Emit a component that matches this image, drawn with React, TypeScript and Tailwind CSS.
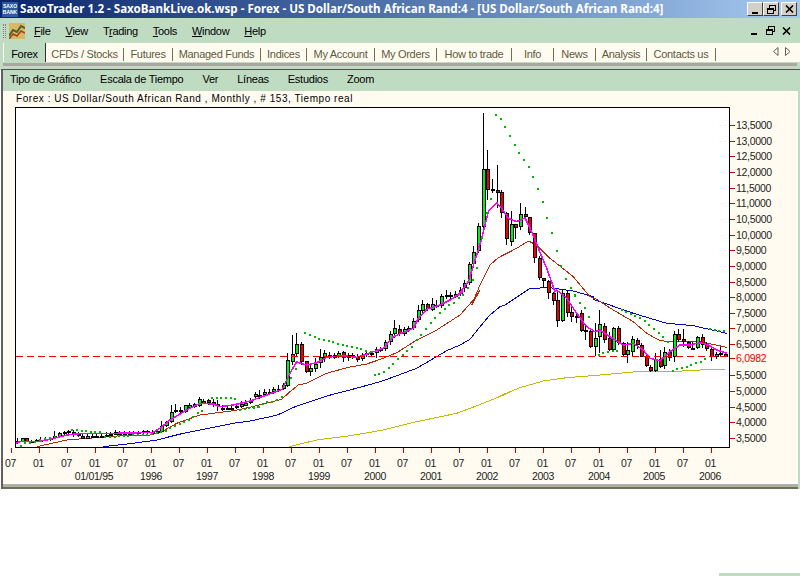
import React from "react"

type Kind = "g" | "r" | "k"
type Candle = [number, number, number, number, Kind]

// values read off the reference: body top, body bottom, wick top, wick bottom
const group1: Candle[] = [
  [182, 186, 174, 192, "k"], [175, 185, 174, 186, "g"], [175, 185, 174, 186, "r"], [184, 186, 180, 188, "k"], [181, 184, 178, 187, "k"],
  [179, 182, 172, 185, "k"], [176, 179, 170, 182, "k"], [175, 178, 170, 182, "k"], [168, 172, 154, 178, "k"], [160, 170, 155, 174, "g"],
  [157, 160, 152, 165, "k"], [154, 157, 150, 162, "k"], [155, 162, 150, 170, "r"], [161, 164, 155, 172, "k"], [167, 172, 160, 174, "r"],
  [167, 172, 160, 174, "g"], [167, 169, 160, 172, "k"], [167, 169, 162, 172, "k"], [167, 169, 162, 172, "k"], [164, 166, 155, 170, "k"],
  [161, 164, 156, 170, "k"], [155, 160, 150, 165, "g"], [155, 160, 152, 165, "r"], [158, 161, 154, 165, "k"], [158, 161, 152, 165, "k"],
  [156, 158, 152, 165, "k"], [156, 158, 152, 165, "k"], [154, 156, 150, 162, "k"], [154, 156, 150, 162, "k"], [156, 158, 150, 162, "k"],
  [154, 157, 150, 162, "k"], [137, 155, 122, 160, "g"], [127, 137, 122, 142, "g"], [95, 127, 75, 130, "g"], [91, 94, 72, 100, "k"],
  [91, 94, 80, 100, "k"], [76, 95, 75, 98, "g"], [74, 78, 70, 85, "g"], [72, 78, 68, 84, "g"], [58, 78, 50, 82, "g"],
  [62, 68, 56, 72, "r"], [60, 67, 56, 74, "r"], [65, 72, 58, 80, "r"], [72, 78, 60, 92, "k"], [83, 86, 75, 92, "k"],
  [83, 86, 78, 90, "k"], [83, 86, 78, 88, "k"], [79, 81, 72, 86, "k"], [72, 80, 64, 84, "g"], [68, 75, 60, 78, "g"],
  [62, 65, 55, 72, "k"],
]

const group2: Candle[] = [
  [313, 322, 306, 330, "g"], [316, 319, 300, 326, "k"], [306, 314, 298, 318, "g"], [306, 309, 298, 316, "k"], [298, 306, 292, 312, "g"],
  [297, 300, 285, 305, "k"], [285, 297, 280, 300, "g"], [210, 287, 190, 290, "g"], [193, 215, 135, 225, "g"], [163, 193, 128, 200, "g"],
  [163, 215, 155, 225, "r"], [214, 245, 212, 250, "r"], [235, 245, 222, 257, "g"], [222, 238, 205, 245, "g"], [202, 220, 178, 235, "g"],
  [190, 204, 180, 215, "g"], [194, 197, 185, 208, "k"], [195, 201, 188, 208, "r"], [190, 197, 182, 205, "g"], [187, 203, 182, 217, "r"],
  [195, 203, 188, 214, "r"], [196, 200, 190, 208, "k"], [200, 207, 192, 217, "r"], [195, 208, 190, 212, "g"], [190, 193, 182, 200, "k"],
  [189, 193, 185, 200, "k"], [178, 190, 170, 203, "g"], [177, 180, 172, 186, "k"], [157, 177, 150, 182, "g"], [133, 157, 122, 165, "g"],
  [115, 133, 90, 145, "g"], [118, 133, 105, 138, "r"], [117, 132, 112, 138, "g"], [115, 118, 108, 125, "k"], [92, 115, 85, 120, "g"],
  [61, 91, 44, 96, "g"], [43, 63, 30, 68, "g"], [43, 58, 38, 64, "r"], [43, 60, 25, 64, "g"], [44, 47, 30, 55, "k"],
  [18, 47, 12, 54, "g"], [15, 18, 0, 28, "k"], [15, 18, 5, 26, "k"], [12, 18, 2, 24, "g"], [0, 12, -8, 18, "g"],
]

const group3: Candle[] = [
  [535, 550, 525, 560, "g"], [478, 535, 470, 540, "g"], [442, 478, 422, 482, "g"], [363, 437, 354, 445, "g"], [193, 365, 25, 368, "g"],
  [193, 255, 135, 285, "r"], [253, 257, 222, 265, "k"], [255, 263, 180, 310, "r"], [262, 325, 255, 338, "r"], [325, 403, 320, 420, "r"],
  [358, 410, 318, 422, "g"], [358, 368, 358, 402, "r"], [327, 367, 295, 375, "g"], [327, 337, 305, 345, "r"], [337, 385, 335, 390, "r"],
  [385, 458, 385, 475, "r"], [458, 520, 452, 525, "r"], [520, 527, 518, 545, "r"], [527, 565, 525, 582, "r"], [565, 587, 562, 600, "r"],
]

const group4: Candle[] = [
  [30, 92, 0, 112, "r"], [10, 92, 0, 95, "g"], [10, 70, 0, 82, "r"], [67, 80, 50, 95, "r"], [78, 82, 70, 98, "k"],
  [70, 122, 60, 125, "r"], [120, 124, 105, 150, "k"], [122, 172, 115, 175, "r"], [145, 172, 100, 198, "g"], [103, 142, 60, 190, "g"],
  [108, 150, 100, 160, "r"], [145, 180, 125, 184, "r"], [115, 180, 112, 184, "g"], [115, 160, 108, 165, "r"], [160, 195, 155, 200, "r"],
  [180, 195, 155, 220, "g"], [148, 187, 138, 202, "g"], [150, 165, 145, 178, "r"], [165, 200, 160, 202, "r"], [198, 227, 195, 232, "r"],
  [230, 242, 225, 245, "r"], [207, 242, 190, 245, "g"], [207, 230, 180, 235, "r"], [187, 228, 172, 236, "g"], [185, 205, 178, 212, "r"],
  [132, 202, 122, 215, "g"], [132, 150, 118, 155, "r"], [148, 155, 118, 170, "r"], [155, 175, 152, 178, "r"], [173, 177, 155, 178, "k"],
  [142, 175, 138, 178, "g"], [142, 165, 132, 175, "r"], [162, 178, 155, 182, "r"], [178, 200, 170, 212, "r"], [192, 202, 185, 208, "g"],
  [190, 194, 170, 202, "k"], [192, 198, 186, 200, "r"],
]

const toFull = (list: Candle[], base: number): Candle[] =>
  list.map(([a, b, c, d, k]) => [base + a / 3, base + b / 3, base + c / 3, base + d / 3, k])

const candles: Candle[] = [...toFull(group1, 380), ...toFull(group2, 290), ...toFull(group3, 105), ...toFull(group4, 290)]

type Pt = [number, number]
const map = (pts: Pt[], ox: number, oy: number): Pt[] => pts.map(([x, y]) => [ox + x / 3, oy + y / 3])
const toPath = (pts: Pt[]) => pts.map(([x, y]) => `${x.toFixed(1)},${y.toFixed(1)}`).join(" ")

const magenta = [
  ...map([[47, 190], [60, 185], [110, 185], [150, 178], [200, 165], [250, 160], [350, 160], [460, 157], [480, 145], [510, 120], [560, 90], [600, 70], [640, 72], [660, 80], [700, 75]], 0, 380),
  ...map([[0, 333], [50, 315], [97, 298], [110, 270], [125, 240], [140, 216], [170, 225], [200, 218], [230, 202], [280, 197], [320, 202], [350, 192], [400, 175], [430, 140], [490, 115], [505, 85], [530, 58], [570, 45], [600, 30], [640, 5]], 250, 290),
  ...map([[55, 570], [85, 530], [110, 450], [125, 400], [145, 320], [170, 293], [185, 310], [205, 340], [230, 350], [255, 338], [275, 380], [295, 430], [320, 490], [345, 560]], 440, 105),
  ...map([[170, 0], [200, 25], [230, 70], [260, 110], [285, 125], [300, 120], [330, 140], [370, 165], [400, 160], [430, 180], [450, 205], [480, 212], [510, 185], [540, 165], [570, 165], [600, 158], [625, 165], [650, 180], [680, 190]], 500, 290),
]

const brown = [
  ...map([[110, 200], [200, 180], [350, 168], [450, 165], [480, 158], [530, 130], [600, 105], [700, 92]], 0, 380),
  ...map([[0, 352], [95, 328], [120, 305], [145, 285], [170, 280], [230, 250], [290, 233], [350, 222], [400, 205], [440, 188], [500, 150], [560, 120], [630, 75], [670, 30], [690, 0]], 250, 290),
  ...map([[95, 600], [120, 540], [150, 480], [175, 458], [230, 430], [265, 408], [290, 420], [330, 460], [400, 515], [450, 575]], 440, 105),
  ...map([[290, 28], [340, 60], [400, 95], [440, 130], [480, 152], [520, 155], [600, 155], [680, 172]], 500, 290),
]

const blue = [
  ...map([[310, 200], [400, 190], [470, 180], [550, 160], [700, 130]], 0, 380),
  ...map([[0, 393], [80, 376], [140, 348], [230, 318], [330, 292], [400, 272], [500, 235], [590, 182], [630, 165], [660, 148], [690, 110], [720, 75], [750, 50]], 250, 290),
  ...map([[195, 600], [270, 550], [330, 548], [400, 558], [460, 575]], 440, 105),
  ...map([[280, 28], [400, 70], [500, 100], [580, 107], [680, 130]], 500, 290),
]

const yellow = [
  ...map([[118, 470], [200, 450], [300, 437], [400, 420], [500, 395], [620, 370], [700, 340], [780, 307]], 250, 290),
  ...map([[0, 317], [60, 293], [130, 273], [200, 263], [300, 255], [400, 246], [510, 245], [600, 240], [675, 238]], 500, 290),
]

const dots: Pt[] = [
  ...map([[62, 198], [75, 190], [90, 190], [105, 185], [120, 180], [135, 178], [150, 173], [165, 170], [215, 150], [230, 150], [245, 152], [258, 153], [272, 155], [286, 155], [300, 155], [315, 170], [330, 170], [345, 170], [358, 168], [372, 168], [385, 167], [400, 166], [415, 166], [428, 166], [442, 164], [455, 163], [470, 160], [484, 155], [497, 152], [510, 145], [525, 138], [540, 132], [552, 125], [566, 120], [580, 110], [594, 100], [607, 92], [636, 53], [650, 53], [664, 53], [678, 54], [692, 55], [706, 58], [720, 90], [735, 88], [748, 85], [762, 83], [776, 80]], 0, 380),
  ...map([[10, 352], [24, 350], [38, 343], [52, 337], [66, 335], [80, 330], [96, 320], [123, 264], [138, 236], [165, 128], [180, 135], [194, 140], [208, 146], [222, 150], [236, 154], [250, 157], [264, 162], [278, 164], [292, 168], [306, 172], [320, 174], [334, 178], [348, 184], [362, 187], [375, 254], [388, 251], [402, 245], [416, 235], [430, 222], [444, 208], [458, 194], [472, 183], [486, 170], [500, 150], [514, 134], [528, 117], [542, 100], [556, 85], [570, 68], [584, 56], [598, 45], [612, 38], [626, 25], [640, 15]], 250, 290),
  ...map([[125, 398], [111, 490], [98, 525], [84, 550], [69, 570], [140, 325], [153, 282], [168, 30], [183, 42], [195, 66], [210, 93], [225, 120], [237, 144], [252, 165], [267, 186], [279, 216], [294, 252], [309, 291], [321, 339], [336, 384], [351, 437], [363, 483], [378, 521], [393, 549], [405, 573], [420, 594]], 440, 105),
  ...map([[225, 15], [240, 38], [255, 55], [268, 80], [297, 195], [310, 190], [325, 187], [338, 184], [352, 183], [365, 60], [378, 66], [392, 72], [406, 78], [420, 85], [434, 92], [448, 105], [462, 118], [476, 130], [490, 140], [505, 155], [518, 243], [532, 238], [546, 234], [560, 230], [574, 225], [588, 220], [602, 215], [616, 208], [630, 118], [644, 121], [658, 122], [672, 122]], 500, 290),
]

const prices = ["13,5000", "13,0000", "12,5000", "12,0000", "11,5000", "11,0000", "10,5000", "10,0000", "9,5000", "9,0000", "8,5000", "8,0000", "7,5000", "7,0000", "6,5000", "", "5,5000", "5,0000", "4,5000", "4,0000", "3,5000"]
const years: [string, number][] = [["01/01/95", 94], ["1996", 151], ["1997", 207], ["1998", 263], ["1999", 319], ["2000", 375], ["2001", 431], ["2002", 487], ["2003", 543], ["2004", 599], ["2005", 654], ["2006", 710]]
const axisFont = "'Liberation Sans', Arial, sans-serif"

function Chart() {
  return (
    <svg className="block w-[795px] h-[376px]" viewBox="3 107 795 376" fontFamily={axisFont}>
      <rect x="15.5" y="107.5" width="714" height="340" fill="#ffffff" stroke="#000000" />
      <g shapeRendering="crispEdges" fill="none" strokeWidth="1">
        <polyline points={toPath(yellow)} stroke="#c4b800" />
        <polyline points={toPath(blue)} stroke="#0000c8" />
        <polyline points={toPath(brown)} stroke="#b82800" />
      </g>
      <g shapeRendering="crispEdges">
        {candles.map(([top, bottom, hi, lo, kind], i) => {
          const x = Math.round(17 + i * 4.658)
          const yHi = Math.max(108, Math.round(hi))
          const yTop = Math.round(top)
          const bodyH = Math.max(3, Math.round(bottom) - yTop)
          return (
            <g key={i}>
              <rect x={x} y={yHi} width="1" height={Math.round(lo) - yHi} fill="#000000" />
              {kind === "k" ? (
                <rect x={x - 1} y={yTop} width="4" height="2" fill="#000000" />
              ) : (
                <>
                  <rect x={x - 1} y={yTop} width="4" height={bodyH} fill="#000000" />
                  <rect x={x} y={yTop + 1} width="2" height={bodyH - 2} fill={kind === "g" ? "#00f010" : "#f00000"} />
                </>
              )}
            </g>
          )
        })}
      </g>
      <polyline points={toPath(magenta)} fill="none" stroke="#ff00ff" strokeWidth="1.5" shapeRendering="crispEdges" />
      <g shapeRendering="crispEdges">
        {dots.map(([x, y], i) => (
          <rect key={i} x={Math.round(x) - 1} y={Math.round(y) - 1} width="2" height="2" fill="#00b400" />
        ))}
        <line x1="16" y1="356.5" x2="729" y2="356.5" stroke="#f00000" strokeDasharray="7 4" />
        {prices.map((p, i) =>
          p ? <rect key={i} x="730" y={Math.round(125 + i * 15.65)} width="5" height="1" fill="#d00000" /> : null
        )}
        <rect x="730" y="358" width="5" height="1" fill="#d00000" />
        {Array.from({ length: 26 }, (_, i) => (
          <rect key={i} x={11 + i * 28} y="448" width="1" height="5" fill="#d00000" />
        ))}
      </g>
      <g fontSize="10.5" fill="#222222">
        {prices.map((p, i) =>
          p ? <text key={p} x="736" y={Math.round(125 + i * 15.65) + 4}>{p}</text> : null
        )}
        <text x="736" y="362" fill="#f00000">6,0982</text>
        {Array.from({ length: 26 }, (_, i) => (
          <text key={i} x={10.5 + i * 28} y="467" textAnchor="middle">{i % 2 === 0 ? "07" : "01"}</text>
        ))}
        {years.map(([label, x]) => (
          <text key={label} x={x} y="480" textAnchor="middle">{label}</text>
        ))}
      </g>
    </svg>
  )
}

function WinButton({ children }: { children: React.ReactNode }) {
  return (
    <div className="flex h-[14px] w-[16px] items-center justify-center border border-t-white border-l-white border-r-[#404040] border-b-[#404040] bg-[#d4d0c8]">
      {children}
    </div>
  )
}

const MinGlyph = () => (
  <svg width="9" height="9" viewBox="0 0 9 9" shapeRendering="crispEdges"><rect x="1" y="7" width="6" height="2" fill="#000" /></svg>
)
const RestoreGlyph = () => (
  <svg width="9" height="9" viewBox="0 0 9 9" fill="none" stroke="#000" shapeRendering="crispEdges">
    <path d="M2.5 2.5V0.5H8.5V5.5H6.5" /><path d="M2.5 0.5H8.5" strokeWidth="1" /><rect x="0.5" y="3.5" width="6" height="5" /><path d="M0.5 4H6.5" />
  </svg>
)
const CloseGlyph = () => (
  <svg width="9" height="8" viewBox="0 0 9 8" fill="none" stroke="#000" strokeWidth="1.6"><path d="M1 0.5L8 7.5M8 0.5L1 7.5" /></svg>
)

const menuItems: [string, string, string][] = [
  ["", "F", "ile"], ["", "V", "iew"], ["T", "r", "ading"], ["", "T", "ools"], ["", "W", "indow"], ["", "H", "elp"],
]
const tabs: [string, number][] = [
  ["CFDs / Stocks", 78], ["Futures", 49], ["Managed Funds", 88], ["Indices", 46], ["My Account", 68], ["My Orders", 62],
  ["How to trade", 75], ["Info", 42], ["News", 42], ["Analysis", 51], ["Contacts us", 69],
]
const chartMenu = ["Tipo de Gráfico", "Escala de Tiempo", "Ver", "Líneas", "Estudios", "Zoom"]

export default function App() {
  return (
    <div className="flex h-[576px] w-[800px] flex-col overflow-hidden bg-white font-['Liberation_Sans',sans-serif] text-[11px] leading-none tracking-[-0.3px] text-[#1a1a1a]">
      {/* title bar */}
      <div className="flex h-[18px] items-center bg-gradient-to-r from-[#0a246a] to-[#a6caf0] pl-[2px] pr-[3px] tracking-normal">
        <div className="flex h-[15px] w-[16px] flex-col items-center justify-center bg-[#2c5a9c] text-[5px] font-bold leading-[6px] text-white">
          <span>SAXO</span>
          <span>BANK</span>
        </div>
        <span className="ml-[2px] flex-1 whitespace-nowrap font-['Noto_Sans',sans-serif] text-[11.6px] font-bold text-white">
          SaxoTrader 1.2 - SaxoBankLive.ok.wsp - Forex - US Dollar/South African Rand:4 - [US Dollar/South African Rand:4]
        </span>
        <div className="flex items-center">
          <WinButton><MinGlyph /></WinButton>
          <WinButton><RestoreGlyph /></WinButton>
          <div className="ml-[2px]"><WinButton><CloseGlyph /></WinButton></div>
        </div>
      </div>

      {/* menu bar */}
      <div className="flex h-[25px] items-center bg-[#bfdbc2] pl-[3px]">
        <div className="h-[14px] w-[3px] border-x border-dotted border-[#808080]" />
        <svg className="ml-[3px]" width="16" height="16" viewBox="0 0 16 16">
          <rect width="16" height="16" fill="#d8b860" />
          <path d="M0 13L4 7L8 9L12 3L16 5" fill="none" stroke="#506030" strokeWidth="2" />
          <path d="M0 16L4 11L8 13L12 8L16 10" fill="none" stroke="#a04020" strokeWidth="1.5" />
        </svg>
        <div className="ml-[9px] flex gap-[15px] pt-[2px] text-black">
          {menuItems.map(([before, key, after]) => (
            <span key={key + after} className="whitespace-nowrap">
              {before}<span className="underline">{key}</span>{after}
            </span>
          ))}
        </div>
        <div className="ml-auto mr-[9px] flex items-center gap-[7px]">
          <MinGlyph />
          <RestoreGlyph />
          <CloseGlyph />
        </div>
      </div>

      {/* tabs */}
      <div className="flex h-[19px] items-stretch bg-[#bfdbc2] pl-[3px]">
        <div className="flex flex-1 items-stretch bg-[#fffbf0] pl-px">
          <div className="flex w-[42px] items-center justify-center border-r border-r-[#303030] bg-[#bfdbc2] pt-[3px] text-black">Forex</div>
          {tabs.map(([label, width]) => (
            <div key={label} style={{ width }} className="flex items-center">
              <span className="flex-1 whitespace-nowrap pt-[3px] text-center text-[#5c5c40]">{label}</span>
              <span className="mt-[3px] h-[13px] w-px bg-[#707050]" />
            </div>
          ))}
          <div className="ml-auto mr-[9px] flex items-center gap-[6px] pb-[3px]">
            <svg width="6" height="9" viewBox="0 0 6 9" fill="none" stroke="#606050"><path d="M5 0.5L0.5 4.5L5 8.5Z" /></svg>
            <svg width="6" height="9" viewBox="0 0 6 9" fill="none" stroke="#606050"><path d="M0.5 0.5L5 4.5L0.5 8.5Z" /></svg>
          </div>
        </div>
      </div>

      {/* separator */}
      <div className="h-[8px] bg-[#bfdbc2] pt-px">
        <div className="mx-[3px] h-[3px] bg-[#a8a8a0]" />
        <div className="ml-px mt-[3px] h-px bg-[#505050]" />
      </div>

      {/* chart window */}
      <div className="ml-px flex flex-col border-l-2 border-l-[#606060] border-r-2 border-r-[#bfdbc2]">
        <div className="flex h-[21px] items-center gap-[19px] bg-[#bfdbc2] pb-[2px] pl-[7px] tracking-[-0.25px] text-black">
          {chartMenu.map((item) => (
            <span key={item} className="whitespace-nowrap">{item}</span>
          ))}
        </div>
        <div className="bg-[#fffbf0]">
          <div className="flex h-[16px] items-center pl-[13px] text-[10px] tracking-[0.55px] text-black">
            Forex : US Dollar/South African Rand , Monthly , # 153, Tiempo real
          </div>
          <Chart />
        </div>
        <div className="h-[6px] border-t border-b-2 border-t-white border-b-[#6a7258] bg-[#b0b0a8]" />
      </div>

      <div className="flex flex-1 items-end justify-end bg-white">
        <div className="h-[4px] w-[81px] border-t border-t-white bg-[#bfdbc2]" />
      </div>
    </div>
  )
}
